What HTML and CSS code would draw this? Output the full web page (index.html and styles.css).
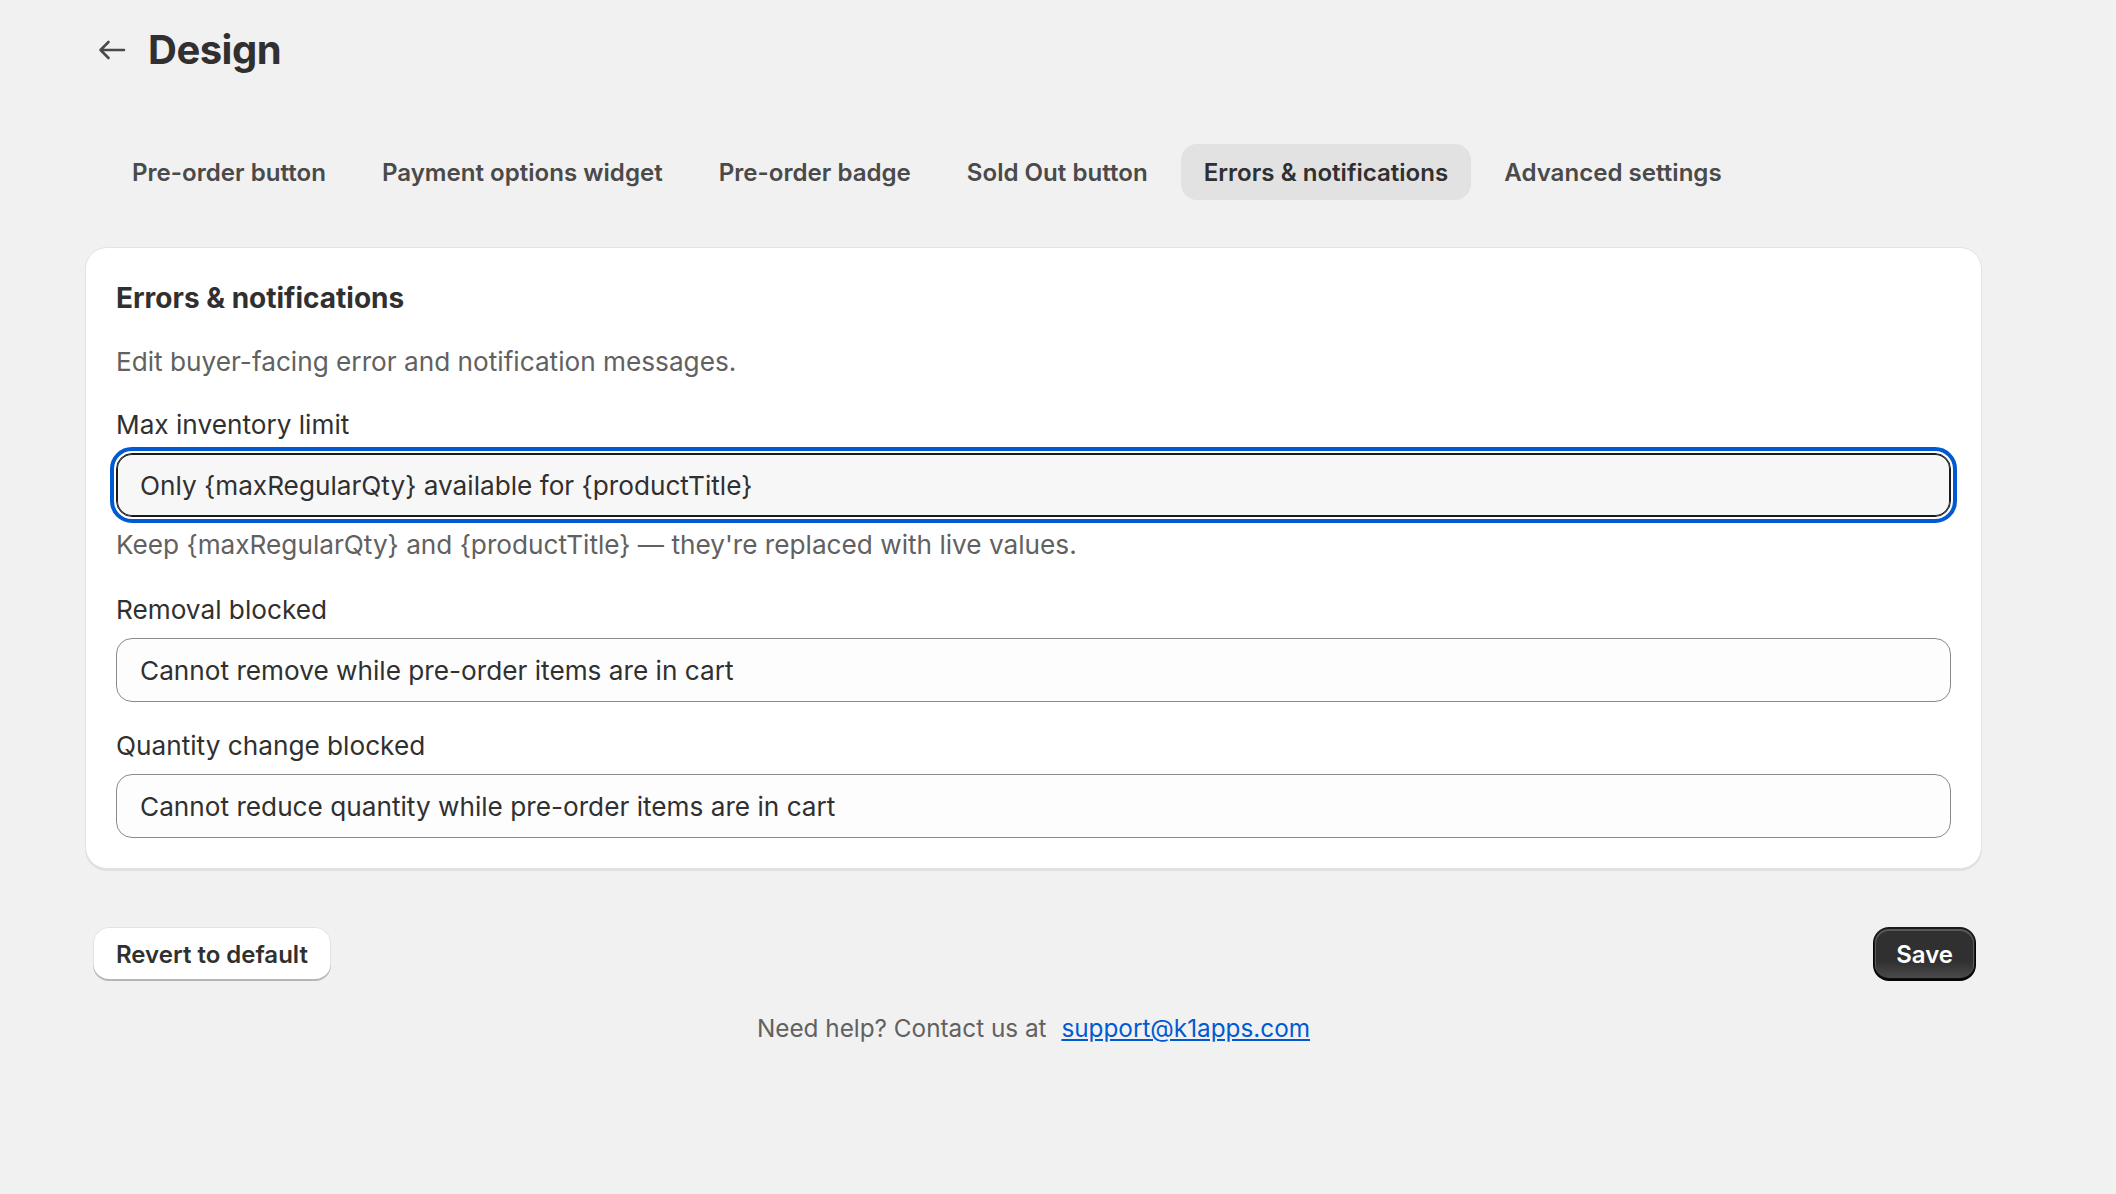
FILE: index.html
```html
<!DOCTYPE html>
<html lang="en">
<head>
    <meta charset="UTF-8">
    <title>Design</title>
    <link rel="stylesheet" href="styles.css">
</head>
<body>

<div class="page">
    <div class="page-header">
        <button class="back-button" aria-label="Back">
            <svg width="28" height="20" viewBox="0 0 28 20">
                <path d="M26 10H2.5M10.5 2L2.5 10L10.5 18" fill="none" stroke="#4a4a4a" stroke-width="2.6" stroke-linecap="round" stroke-linejoin="round"/>
            </svg>
        </button>
        <h1>Design</h1>
    </div>

    <div class="tabs">
        <button class="tab">Pre-order button</button>
        <button class="tab">Payment options widget</button>
        <button class="tab">Pre-order badge</button>
        <button class="tab">Sold Out button</button>
        <button class="tab active">Errors &amp; notifications</button>
        <button class="tab">Advanced settings</button>
    </div>

    <div class="card">
        <h2 class="card-title">Errors &amp; notifications</h2>
        <p class="card-desc">Edit buyer-facing error and notification messages.</p>

        <div class="field">
            <label for="max-inventory">Max inventory limit</label>
            <input id="max-inventory" class="focused" type="text" value="Only {maxRegularQty} available for {productTitle}">
            <p class="help">Keep {maxRegularQty} and {productTitle} — they're replaced with live values.</p>
        </div>

        <div class="field">
            <label for="removal-blocked">Removal blocked</label>
            <input id="removal-blocked" type="text" value="Cannot remove while pre-order items are in cart">
        </div>

        <div class="field">
            <label for="quantity-blocked">Quantity change blocked</label>
            <input id="quantity-blocked" type="text" value="Cannot reduce quantity while pre-order items are in cart">
        </div>
    </div>

    <div class="actions">
        <button class="btn">Revert to default</button>
        <button class="btn primary">Save</button>
    </div>

    <div class="footer">
        Need help? Contact us at <a href="#">support@k1apps.com</a>
    </div>
</div>

</body>
</html>
```

FILE: styles.css
```css
:root {
    --bg-color: #f1f1f1;
    --text-color: #303030;
    --text-subdued: #616161;
    --tab-color: #4a4a4a;
    --focus-color: #005bd3;
    --link-color: #005bd3;
}

body {
    margin: 0;
    background-color: var(--bg-color);
    color: var(--text-color);
    font-family: Inter, "Noto Sans", sans-serif;
}

.page {
    width: 1897px;
    margin-left: 85px;
    padding-top: 26px;
}

/* Title bar */
.page-header {
    display: flex;
    align-items: center;
    height: 48px;
    gap: 22px;
}
.back-button {
    border: none;
    background: none;
    padding: 0;
    margin-left: 13px;
    width: 28px;
    height: 28px;
    display: flex;
    align-items: center;
    justify-content: center;
}
.page-header h1 {
    margin: 0;
    font-size: 40px;
    font-weight: 700;
    letter-spacing: -0.5px;
    line-height: 48px;
}

/* Tabs */
.tabs {
    display: flex;
    gap: 10px;
    margin-top: 70px;
    margin-left: 24px;
}
.tab {
    font-family: inherit;
    font-size: 24.1px;
    font-weight: 600;
    color: var(--tab-color);
    background: none;
    border: none;
    border-radius: 16px;
    height: 56px;
    padding: 0 23px;
}
.tab.active {
    background-color: #e2e2e2;
    color: var(--text-color);
}

/* Card */
.card {
    margin-top: 47px;
    background-color: #ffffff;
    border: 1px solid #e3e3e3;
    border-radius: 22px;
    box-shadow: 0 2px 0 0 rgba(26, 26, 26, 0.08);
    padding: 32px 30px 30px;
}
.card-title {
    margin: 0;
    font-size: 28px;
    font-weight: 650;
    line-height: 36px;
}
.card-desc {
    margin: 28px 0 0;
    font-size: 26.2px;
    line-height: 36px;
    color: var(--text-subdued);
}

.field {
    margin-top: 29px;
}
.field + .field {
    margin-top: 33px;
}
.field + .field + .field {
    margin-top: 28px;
}
.field label {
    display: block;
    font-size: 26.2px;
    line-height: 32px;
}
.field input {
    display: block;
    box-sizing: border-box;
    width: 100%;
    height: 64px;
    margin-top: 12px;
    padding: 0 23px;
    font-family: inherit;
    font-size: 26.2px;
    color: var(--text-color);
    background-color: #fdfdfd;
    border: 1px solid #8a8a8a;
    border-radius: 16px;
}
.field input.focused {
    background-color: #f7f7f7;
    border-color: #1a1a1a;
    box-shadow: inset 0 0 0 1px #1a1a1a;
    outline: 4px solid var(--focus-color);
    outline-offset: 2px;
}
.help {
    margin: 12px 0 0;
    font-size: 26.2px;
    line-height: 32px;
    color: var(--text-subdued);
}

/* Buttons */
.actions {
    display: flex;
    justify-content: space-between;
    margin-top: 58px;
    padding: 0 6px 0 8px;
}
.btn {
    font-family: inherit;
    font-size: 24px;
    font-weight: 600;
    color: var(--text-color);
    height: 54px;
    padding: 0 23px;
    border: none;
    border-radius: 16px;
    background-color: #ffffff;
    box-shadow: inset 0 -2px 0 0 #b5b5b5, inset 0 0 0 1px #e3e3e3;
}
.btn.primary {
    color: #ffffff;
    background: linear-gradient(180deg, rgba(48, 48, 48, 0) 63%, rgba(255, 255, 255, 0.15) 100%), #303030;
    box-shadow: inset 0 -2px 0 1px rgba(0, 0, 0, 0.8), inset 0 0 0 2px #1a1a1a, inset 0 1px 0 3px rgba(255, 255, 255, 0.2);
}

/* Footer */
.footer {
    margin-top: 31px;
    text-align: center;
    font-size: 24.3px;
    line-height: 32px;
    color: var(--text-subdued);
}
.footer a {
    margin-left: 8px;
    color: var(--link-color);
}
```
